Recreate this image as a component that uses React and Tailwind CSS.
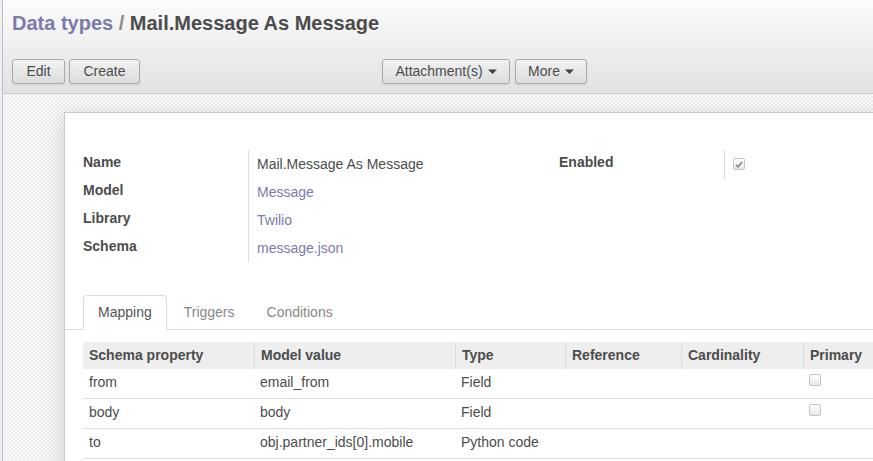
import React from 'react';

const FIELDS = [
  { label: 'Name', value: 'Mail.Message As Message', link: false },
  { label: 'Model', value: 'Message', link: true },
  { label: 'Library', value: 'Twilio', link: true },
  { label: 'Schema', value: 'message.json', link: true },
];

const ROWS = [
  { prop: 'from', value: 'email_from', type: 'Field', primary: true },
  { prop: 'body', value: 'body', type: 'Field', primary: true },
  { prop: 'to', value: 'obj.partner_ids[0].mobile', type: 'Python code', primary: false },
];

const COLS = ['Schema property', 'Model value', 'Type', 'Reference', 'Cardinality', 'Primary'];

function Caret() {
  return (
    <svg width="9" height="5" viewBox="0 0 9 5" className="ml-[5px] inline-block">
      <path d="M0 0.5 L9 0.5 L4.5 5 Z" fill="#3f3f3f" />
    </svg>
  );
}

function Button({ children, width, caret }) {
  return (
    <button
      className="flex h-[25px] items-center justify-center rounded-[3px] border border-[#ababab] bg-gradient-to-b from-[#f2f2f2] to-[#dcdcdc] text-[14px] leading-[17px] text-[#4c4c4c] shadow-[0_1px_2px_rgba(0,0,0,0.1)]"
      style={{ width }}
    >
      {children}
      {caret && <Caret />}
    </button>
  );
}

function Checkbox({ checked }) {
  return (
    <div className="flex h-[12px] w-[12px] items-center justify-center rounded-[2px] border border-[#c4c4c4] bg-gradient-to-b from-[#fdfdfd] to-[#e8e8e8]">
      {checked && (
        <svg width="8" height="7" viewBox="0 0 8 7">
          <path d="M1 3.8 L3 5.8 L7 1" stroke="#8f8f8f" strokeWidth="1.8" fill="none" />
        </svg>
      )}
    </div>
  );
}

export default function App() {
  return (
    <div className="h-[461px] w-[873px] overflow-hidden bg-[#efefef] pl-[2px] font-['Liberation_Sans',Arial,sans-serif] text-[14px] text-[#4c4c4c]">
      <div className="flex h-full flex-col border-l border-[#bdbdcc]">
        {/* Header */}
        <div className="h-[94px] shrink-0 border-b border-[#cacaca] bg-gradient-to-b from-[#fcfcfc] to-[#e2e2e2] px-[9px]">
          <div className="pt-[11px] text-[20px] font-bold leading-[24px]">
            <span className="text-[#7c7bad]">Data types</span>
            <span className="text-[#8a8a8a]"> / </span>
            <span>Mail.Message As Message</span>
          </div>
          <div className="mt-[24px] flex">
            <div className="flex gap-[4px]">
              <Button width={53}>Edit</Button>
              <Button width={71}>Create</Button>
            </div>
            <div className="ml-[242px] flex gap-[5px]">
              <Button width={128} caret>Attachment(s)</Button>
              <Button width={72} caret>More</Button>
            </div>
          </div>
        </div>

        {/* Sheet background */}
        <div className="flex-1 bg-[repeating-conic-gradient(#ededed_0%_25%,#f9f9f9_0%_50%)] bg-[length:4px_4px] pl-[61px] pt-[18px]">
          <div className="h-[400px] w-[880px] border border-[#c8c8d3] bg-white shadow-[0_4px_20px_rgba(0,0,0,0.15)]">
            {/* Form groups */}
            <div className="flex pl-[18px] pt-[37px]">
              <div className="w-[476px]">
                {FIELDS.map((f) => (
                  <div key={f.label} className="flex h-[28px]">
                    <div className="w-[165px] pt-[2px] font-bold leading-[20px]">{f.label}</div>
                    <div className={`border-l border-[#dddddd] pl-[8px] pt-[4px] leading-[20px] ${f.link ? 'text-[#7c7bad]' : ''}`}>
                      {f.value}
                    </div>
                  </div>
                ))}
              </div>
              <div className="flex h-[30px]">
                <div className="w-[165px] pt-[2px] font-bold leading-[20px]">Enabled</div>
                <div className="border-l border-[#dddddd] pl-[8px] pt-[8px]">
                  <Checkbox checked />
                </div>
              </div>
            </div>

            {/* Tabs */}
            <div className="mt-[33px] flex border-b border-[#dddddd] pl-[18px]">
              <div className="-mb-px mr-[2px] rounded-t-[4px] border border-[#dddddd] border-b-white bg-white px-[14px] py-[6px] leading-[20px] text-[#555]">
                Mapping
              </div>
              <div className="mr-[2px] border border-transparent px-[14px] py-[6px] leading-[20px] text-[#888]">Triggers</div>
              <div className="border border-transparent px-[14px] py-[6px] leading-[20px] text-[#888]">Conditions</div>
            </div>

            {/* Table */}
            <div className="ml-[18px] mt-[12px] w-[820px]">
              <div className="grid h-[27px] grid-cols-[171px_201px_110px_116px_122px_1fr] bg-[#eeeeee] font-bold">
                {COLS.map((c, i) => (
                  <div key={c} className={`px-[6px] pt-[3px] leading-[20px] ${i > 0 ? 'border-l border-[#dcdcdc]' : ''}`}>
                    {c}
                  </div>
                ))}
              </div>
              {ROWS.map((r) => (
                <div key={r.prop} className="grid h-[30px] grid-cols-[171px_201px_110px_116px_122px_1fr] border-b border-[#dddddd]">
                  <div className="px-[6px] pt-[3px] leading-[20px]">{r.prop}</div>
                  <div className="px-[6px] pt-[3px] leading-[20px]">{r.value}</div>
                  <div className="px-[6px] pt-[3px] leading-[20px]">{r.type}</div>
                  <div />
                  <div />
                  <div className="px-[6px] pt-[5px]">{r.primary && <Checkbox />}</div>
                </div>
              ))}
            </div>
          </div>
        </div>
      </div>
    </div>
  );
}
